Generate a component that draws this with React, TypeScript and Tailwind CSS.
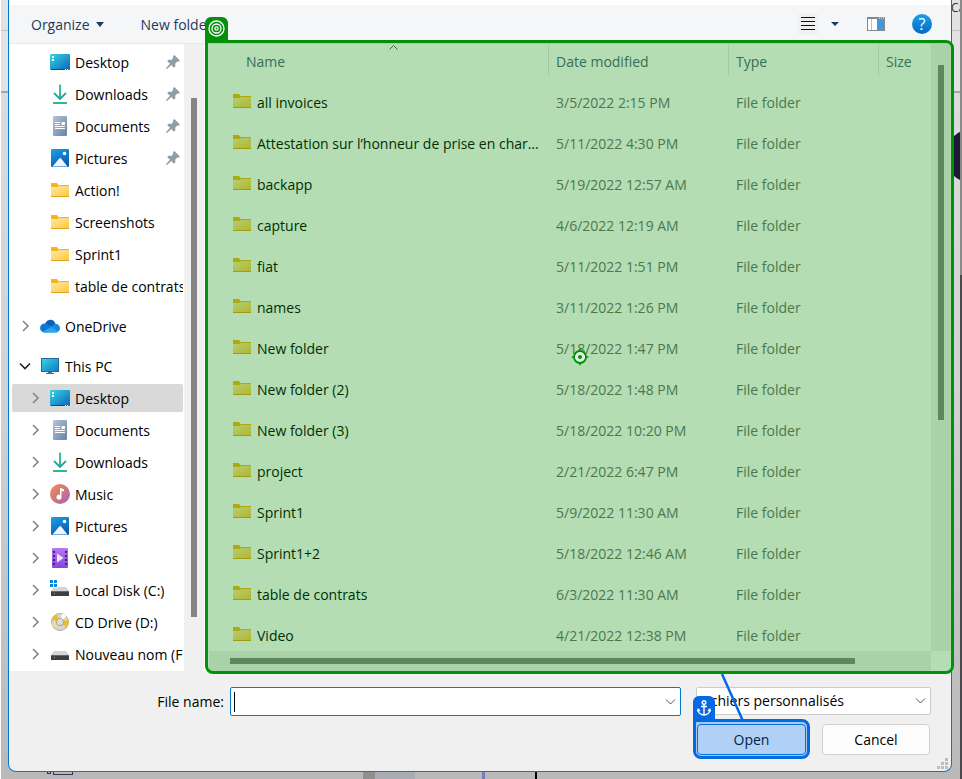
import type { ReactNode } from "react";

function FolderIcon() {
  return (
    <svg width="18" height="16" viewBox="0 0 18 16" aria-hidden="true">
      <defs>
        <linearGradient id="folder" x1="0" y1="0" x2="1" y2="1">
          <stop offset="0" stopColor="#ffe8a6" />
          <stop offset="1" stopColor="#fdc93f" />
        </linearGradient>
      </defs>
      <path d="M0 1h6l1.500 2H18v6H0z" fill="#f5b517" />
      <path d="M0 5h6.500l1.500-1H18v10H0z" fill="url(#folder)" />
      <path d="M0 14h18v1H0z" fill="#e0a21a" />
    </svg>
  );
}

function DesktopIcon() {
  return (
    <svg width="20" height="16" viewBox="0 0 20 16" aria-hidden="true">
      <defs>
        <linearGradient id="desk" x1="0" y1="0" x2="1" y2="1">
          <stop offset="0" stopColor="#33d6e2" />
          <stop offset="1" stopColor="#0f63bd" />
        </linearGradient>
      </defs>
      <rect width="20" height="16" rx="1" fill="url(#desk)" />
      <path d="M2 2h2v2H2zM2 5h2v2H2z" fill="#fff" />
      <path d="M1 15h14v1H1z" fill="#084a86" />
      <path d="M15 15h1v1h-1zM17 15h1v1h-1z" fill="#fff" />
    </svg>
  );
}

function DownloadIcon() {
  return (
    <svg width="16" height="20" viewBox="0 0 16 20" fill="none" aria-hidden="true">
      <defs>
        <linearGradient id="down" x1="0" y1="0" x2="0" y2="20" gradientUnits="userSpaceOnUse">
          <stop offset="0" stopColor="#2fc28c" />
          <stop offset="1" stopColor="#129a9a" />
        </linearGradient>
      </defs>
      <path d="M8 0.500V15M2 9l6 6 6-6" stroke="url(#down)" strokeWidth="1.800" />
      <path d="M1 19h14" stroke="#2fb98a" strokeWidth="2" />
    </svg>
  );
}

function DocumentIcon() {
  return (
    <svg width="14" height="20" viewBox="0 0 14 20" aria-hidden="true">
      <defs>
        <linearGradient id="doc" x1="0" y1="0" x2="1" y2="1">
          <stop offset="0" stopColor="#b3c6d9" />
          <stop offset="1" stopColor="#6584a8" />
        </linearGradient>
      </defs>
      <rect width="14" height="20" rx="1" fill="url(#doc)" />
      <path d="M2 6h5v1H2zM2 8h5v1H2zM8.500 6H12v3H8.500zM2 10h10v1H2zM2 12h10v1H2z" fill="#fff" />
    </svg>
  );
}

function PictureIcon() {
  return (
    <svg width="18" height="18" viewBox="0 0 18 18" aria-hidden="true">
      <defs>
        <linearGradient id="pic" x1="0" y1="0" x2="0.500" y2="1">
          <stop offset="0" stopColor="#1ba1e8" />
          <stop offset="1" stopColor="#0a5db5" />
        </linearGradient>
      </defs>
      <rect width="18" height="18" rx="1" fill="url(#pic)" />
      <circle cx="13.500" cy="4.500" r="1.800" fill="#fff" />
      <path d="M1.500 17.500L8.500 9.200q.7-.6 1.400 0L16.500 17.500z" fill="#eef6fd" />
    </svg>
  );
}

function CloudIcon() {
  return (
    <svg width="20" height="14" viewBox="0 0 20 14" aria-hidden="true">
      <path d="M5 5C7-.5 14-1 15.500 5L10 9z" fill="#0a5fb6" />
      <path d="M4 13.500C-1.500 12-1 5 4.500 4.500c2-.2 3.500.8 9 4.500L6 13.500z" fill="#0c77d4" />
      <path d="M10 8l5.500-3.200C21 5 21.500 12.500 16.500 13.300z" fill="#1489df" />
      <path d="M2.500 12.800L11 8l7.500 4.500c-1 .9-2 1.200-3 1.200H5.200c-1 0-2-.3-2.700-.9z" fill="#29a7ea" />
    </svg>
  );
}

function ComputerIcon() {
  return (
    <svg width="18" height="16" viewBox="0 0 18 16" aria-hidden="true">
      <defs>
        <linearGradient id="pc" x1="0" y1="0" x2="1" y2="1">
          <stop offset="0" stopColor="#35d8e4" />
          <stop offset="1" stopColor="#1476c6" />
        </linearGradient>
      </defs>
      <rect x="0.500" y="0.500" width="17" height="13" fill="url(#pc)" stroke="#216c9c" />
      <path d="M7 14h4v1h2v1H5v-1h2z" fill="#56697a" />
    </svg>
  );
}

function MusicIcon() {
  return (
    <svg width="20" height="20" viewBox="0 0 20 20" aria-hidden="true">
      <defs>
        <linearGradient id="music" x1="0" y1="0" x2="1" y2="1">
          <stop offset="0.100" stopColor="#ee8a58" />
          <stop offset="1" stopColor="#a75fb5" />
        </linearGradient>
      </defs>
      <circle cx="10" cy="10" r="10" fill="url(#music)" />
      <path d="M10 4h1l3 1.500v2L11.500 6.700v6.500A2.500 2.500 0 1 1 10 10.900z" fill="#fff" />
    </svg>
  );
}

function VideoIcon() {
  return (
    <svg width="16" height="20" viewBox="0 0 16 20" aria-hidden="true">
      <defs>
        <linearGradient id="video" x1="0" y1="0" x2="0" y2="1">
          <stop offset="0" stopColor="#b678f2" />
          <stop offset="1" stopColor="#8546dc" />
        </linearGradient>
      </defs>
      <rect width="16" height="20" rx="1" fill="url(#video)" />
      <path
        d="M1 3h2v2H1zM1 7h2v2H1zM1 11h2v2H1zM1 15h2v2H1zM13 3h2v2h-2zM13 7h2v2h-2zM13 11h2v2h-2zM13 15h2v2h-2z"
        fill="#402473"
      />
      <path d="M5 5.500l6.500 4.500L5 14.500z" fill="#f2e6ff" />
    </svg>
  );
}

function DriveIcon({ system = false }: { system?: boolean }) {
  return (
    <svg width="20" height="20" viewBox="0 0 20 20" aria-hidden="true">
      <path d="M4 7h12l3 4H1z" fill="#d3d5d8" />
      <path d="M1 11h18v5H1z" fill="#3d4043" />
      <path d="M1 11h18v1H1z" fill="#66696c" />
      <path d="M4 13h1v1H4z" fill="#39e05a" />
      {system && (
        <>
          <path d="M0 0h8v8H0z" fill="#fff" />
          <path d="M0 0h3v3H0zM4 0h3v3H4zM0 4h3v3H0zM4 4h3v3H4z" fill="#0c86d8" />
        </>
      )}
    </svg>
  );
}

function DiscIcon() {
  return (
    <svg width="18" height="18" viewBox="0 0 18 18" aria-hidden="true">
      <circle cx="9" cy="9" r="8.500" fill="#d9d6cc" stroke="#b3afa2" />
      <path d="M9 9L.8 7A8.500 8.500 0 0 1 6 1.200zM9 9l8.200-2.500a8.500 8.500 0 0 1-2 8z" fill="#e9c02c" />
      <path d="M9 9L2 14A8.500 8.500 0 0 1 .6 10z" fill="#f1dc86" />
      <path d="M9 9L11 .7A8.500 8.500 0 0 1 15.500 3z" fill="#fff" />
      <circle cx="9" cy="9" r="3.500" fill="#eeeeea" stroke="#9c9a90" />
      <circle cx="9" cy="9" r="1.400" fill="#fff" stroke="#a9a798" strokeWidth="0.600" />
    </svg>
  );
}

function PinIcon() {
  return (
    <svg width="14" height="14" viewBox="0 0 14 14" aria-hidden="true" fill="#919da5">
      <path d="M7 1.200L8.300 0 14 5.400l-1.200 1.200-1.500-.1-2.100 2.300.1 2.700-1.200 1.200-2.700-2.600L1 13.900l-1 .1.200-1L3.900 8.700 1.200 6l1.200-1.200 2.800.1 2-2z" />
    </svg>
  );
}

function Chevron({ open = false }: { open?: boolean }) {
  return open ? (
    <svg width="12" height="12" viewBox="0 0 12 12" fill="none" stroke="#222" strokeWidth="1.600" aria-hidden="true">
      <path d="M1 3.500l5 5 5-5" />
    </svg>
  ) : (
    <svg width="12" height="12" viewBox="0 0 12 12" fill="none" stroke="#858585" strokeWidth="1.600" aria-hidden="true">
      <path d="M4 1l5 5-5 5" />
    </svg>
  );
}

function FieldChevron() {
  return (
    <svg width="11" height="6" viewBox="0 0 11 6" fill="none" stroke="#505050" aria-hidden="true">
      <path d="M1 .5l4.500 4.500L10 .5" />
    </svg>
  );
}

type Place = { name: string; icon: ReactNode; pinned?: boolean; expandable?: boolean; selected?: boolean };

const quickAccess: Place[] = [
  { name: "Desktop", icon: <DesktopIcon />, pinned: true },
  { name: "Downloads", icon: <DownloadIcon />, pinned: true },
  { name: "Documents", icon: <DocumentIcon />, pinned: true },
  { name: "Pictures", icon: <PictureIcon />, pinned: true },
  { name: "Action!", icon: <FolderIcon /> },
  { name: "Screenshots", icon: <FolderIcon /> },
  { name: "Sprint1", icon: <FolderIcon /> },
  { name: "table de contrats", icon: <FolderIcon /> },
];

const thisPc: Place[] = [
  { name: "Desktop", icon: <DesktopIcon />, expandable: true, selected: true },
  { name: "Documents", icon: <DocumentIcon />, expandable: true },
  { name: "Downloads", icon: <DownloadIcon />, expandable: true },
  { name: "Music", icon: <MusicIcon />, expandable: true },
  { name: "Pictures", icon: <PictureIcon />, expandable: true },
  { name: "Videos", icon: <VideoIcon />, expandable: true },
  { name: "Local Disk (C:)", icon: <DriveIcon system />, expandable: true },
  { name: "CD Drive (D:)", icon: <DiscIcon />, expandable: true },
  { name: "Nouveau nom (F:)", icon: <DriveIcon />, expandable: true },
];

const files = [
  ["all invoices", "3/5/2022 2:15 PM"],
  ["Attestation sur l’honneur de prise en charge", "5/11/2022 4:30 PM"],
  ["backapp", "5/19/2022 12:57 AM"],
  ["capture", "4/6/2022 12:19 AM"],
  ["fiat", "5/11/2022 1:51 PM"],
  ["names", "3/11/2022 1:26 PM"],
  ["New folder", "5/18/2022 1:47 PM"],
  ["New folder (2)", "5/18/2022 1:48 PM"],
  ["New folder (3)", "5/18/2022 10:20 PM"],
  ["project", "2/21/2022 6:47 PM"],
  ["Sprint1", "5/9/2022 11:30 AM"],
  ["Sprint1+2", "5/18/2022 12:46 AM"],
  ["table de contrats", "6/3/2022 11:30 AM"],
  ["Video", "4/21/2022 12:38 PM"],
];

function PlaceRow({ place }: { place: Place }) {
  return (
    <li className="flex h-8 items-center pr-px pl-[3px]">
      <button
        type="button"
        className={`flex h-7 w-full items-center overflow-hidden rounded-xs pl-[17px] text-left ${place.selected ? "bg-[#d9d9d9]" : ""}`}
      >
        <span className="w-[19px] shrink-0">{place.expandable && <Chevron />}</span>
        <span className="flex w-6 shrink-0 justify-center">{place.icon}</span>
        <span className="ml-[3px] grow pt-0.5 whitespace-nowrap">{place.name}</span>
        {place.pinned && (
          <span className="mr-[3px] shrink-0">
            <PinIcon />
          </span>
        )}
      </button>
    </li>
  );
}

function RootRow({ name, icon, open }: { name: string; icon: ReactNode; open?: boolean }) {
  return (
    <li className="mt-2 flex h-8 items-center pl-2.5">
      <button type="button" className="flex items-center">
        <Chevron open={open} />
        <span className="ml-2 flex w-[22px] justify-center">{icon}</span>
        <span className="ml-1 pt-0.5">{name}</span>
      </button>
    </li>
  );
}

function Toolbar() {
  return (
    <div className="flex h-[39px] items-center border-b border-[#e8e9eb] bg-[#f5f6f8] pr-[19px] pl-[22px] text-[#1e395b]">
      <button type="button" className="flex items-center gap-1.5">
        <span className="pt-0.5">Organize</span>
        <svg width="8" height="5" viewBox="0 0 8 5" fill="#1e395b" aria-hidden="true">
          <path d="M0 0h8L4 5z" />
        </svg>
      </button>
      <button type="button" className="ml-[37px] pt-0.5">
        New folder
      </button>
      <div className="ml-auto flex items-center">
        <button type="button" aria-label="Change view" className="bg-[#f0f0f0] px-[3px] py-[3px]">
          <svg width="14" height="14" viewBox="0 0 14 14" stroke="#111" aria-hidden="true">
            <path d="M0 .5h14M0 4.500h14M0 8.500h14M0 12.500h14" />
          </svg>
        </button>
        <button type="button" aria-label="More views" className="ml-3 p-px">
          <svg width="8" height="4" viewBox="0 0 8 4" fill="#1e395b" aria-hidden="true">
            <path d="M0 0h8L4 4z" />
          </svg>
        </button>
        <button type="button" aria-label="Show the preview pane" className="ml-[27px]">
          <svg width="18" height="14" viewBox="0 0 18 14" aria-hidden="true">
            <rect x="0.500" y="0.500" width="17" height="13" fill="#fff" stroke="#85888c" />
            <path d="M1 0h16v2H1z" fill="#85888c" />
            <path d="M4 2h1v11H4z" fill="#b9bcc0" />
            <path d="M10 2h7v11h-7z" fill="#3f98e0" />
            <path d="M12 .5h1v1h-1zM14 .5h1v1h-1zM16 .5h1v1h-1z" fill="#fff" />
          </svg>
        </button>
        <button
          type="button"
          aria-label="Get help"
          className="ml-[27px] flex size-5 items-center justify-center rounded-full bg-linear-to-b from-[#1ba0ea] to-[#0868c4] text-base leading-5 text-white"
        >
          ?
        </button>
      </div>
    </div>
  );
}

function Sidebar() {
  return (
    <nav className="flex w-[195px] shrink-0 bg-white text-black">
      <ul className="min-w-0 grow pt-0.5 pb-px">
        {quickAccess.map((place) => (
          <PlaceRow key={place.name} place={place} />
        ))}
        <RootRow name="OneDrive" icon={<CloudIcon />} />
        <RootRow name="This PC" icon={<ComputerIcon />} open />
        {thisPc.map((place) => (
          <PlaceRow key={place.name} place={place} />
        ))}
      </ul>
      <div className="w-5 shrink-0 bg-[#f0f0f0] px-[7px] pt-[54px] pb-[54px]">
        <div className="h-full bg-[#858585]" />
      </div>
    </nav>
  );
}

function FileTable() {
  return (
    <table className="w-full table-fixed border-collapse text-left">
      <colgroup>
        <col />
        <col className="w-[180px]" />
        <col className="w-[150px]" />
        <col className="w-[52px]" />
      </colgroup>
      <thead>
        <tr className="h-[38px] align-top text-[#4c607a]">
          <th className="p-0 font-normal">
            <div className="relative h-8 border-r border-[#e5e5e5] pt-0.5 pl-10 leading-8">
              Name
              <svg
                className="absolute top-px left-[183px]"
                width="9"
                height="5"
                viewBox="0 0 9 5"
                fill="none"
                stroke="#5c5c5c"
                aria-hidden="true"
              >
                <path d="M.5 4.500l4-4 4 4" />
              </svg>
            </div>
          </th>
          <th className="p-0 font-normal">
            <div className="h-8 border-r border-[#e5e5e5] pt-0.5 pl-[7px] leading-8">Date modified</div>
          </th>
          <th className="p-0 font-normal">
            <div className="h-8 border-r border-[#e5e5e5] pt-0.5 pl-[7px] leading-8">Type</div>
          </th>
          <th className="p-0 font-normal">
            <div className="h-8 pt-0.5 pl-[7px] leading-8">Size</div>
          </th>
        </tr>
      </thead>
      <tbody>
        {files.map(([name, date]) => (
          <tr key={name} className="h-[41px] text-[#6d6d6d]">
            <td className="p-0 pr-1.5 text-black">
              <div className="flex items-center gap-1.5 pl-[27px]">
                <span className="mb-1 shrink-0">
                  <FolderIcon />
                </span>
                <span className="truncate">{name}</span>
              </div>
            </td>
            <td className="p-0 pl-[7px]">{date}</td>
            <td className="p-0 pl-[7px]">File folder</td>
            <td />
          </tr>
        ))}
      </tbody>
    </table>
  );
}

function TargetHighlight() {
  return (
    <div className="pointer-events-none absolute -top-1 -right-[3px] -bottom-[3px] left-px rounded-lg rounded-tl-none border-[3px] border-[#048f0c] bg-[#069006]/30 bg-clip-padding">
      <div className="absolute -top-[26px] -left-[3px] flex size-[23px] items-center justify-center rounded-t-md bg-[#048f0c]">
        <svg width="17" height="17" viewBox="0 0 17 17" fill="none" stroke="#fff" strokeWidth="1.300" aria-hidden="true">
          <circle cx="8.500" cy="8.500" r="7.500" />
          <circle cx="8.500" cy="8.500" r="4.500" />
          <circle cx="8.500" cy="8.500" r="1.600" />
        </svg>
      </div>
      <svg
        className="absolute top-1/2 left-1/2 -translate-x-1/2 -translate-y-1/2"
        width="17"
        height="17"
        viewBox="0 0 17 17"
        aria-hidden="true"
      >
        <circle cx="8.500" cy="8.500" r="6" fill="#dff2df" stroke="#048f0c" strokeWidth="1.800" />
        <circle cx="8.500" cy="8.500" r="2" fill="#048f0c" />
        <path d="M8.500 0v3M8.500 14v3M0 8.500h3M14 8.500h3" stroke="#048f0c" strokeWidth="1.500" />
      </svg>
    </div>
  );
}

function FilePane() {
  return (
    <section className="relative flex min-w-0 grow flex-col bg-white pl-[2px]">
      <div className="flex h-0 grow overflow-hidden">
        <div className="min-w-0 grow">
          <FileTable />
        </div>
        <div className="w-5 shrink-0 bg-[#f0f0f0] px-[7px] pt-[21px]">
          <div className="h-[355px] bg-[#858585]" />
        </div>
      </div>
      <div className="mr-5 ml-[3px] h-5 shrink-0 bg-[#f0f0f0] py-[7px] pr-[76px] pl-[21px]">
        <div className="h-full bg-[#858585]" />
      </div>
      <TargetHighlight />
    </section>
  );
}

function Footer() {
  return (
    <form className="pt-4 pr-5 pb-4 pl-5 text-black" onSubmit={(event) => event.preventDefault()}>
      <div className="flex items-start">
        <label htmlFor="file-name" className="w-[195px] text-right leading-[29px]">
          File name:
        </label>
        <div className="ml-[6px] flex h-[29px] grow items-center rounded-xs border border-[#0078d4] bg-white pr-1 pl-[3px]">
          <span className="h-5 w-px bg-black" />
          <input id="file-name" type="text" className="min-w-0 grow bg-transparent outline-none" />
          <button type="button" aria-label="Previous file names">
            <FieldChevron />
          </button>
        </div>
        <div className="relative ml-[15px] h-7 w-[235px]">
          <select
            aria-label="File type"
            className="h-7 w-full appearance-none rounded-xs border border-[#cccccc] bg-white pr-6 pl-[3px] outline-none"
          >
            <option>Fichiers personnalisés</option>
          </select>
          <span className="pointer-events-none absolute inset-y-0 right-[5px] flex items-center">
            <FieldChevron />
          </span>
        </div>
      </div>
      <div className="mt-2 flex justify-end gap-4 pr-px">
        <div className="relative">
          <button type="submit" className="h-[31px] w-[109px] rounded-sm border border-[#0078d4] bg-[#fdfdfd]">
            Open
          </button>
          <div className="pointer-events-none absolute -inset-x-1 -top-[5px] -bottom-1 rounded-lg rounded-tl-none border-[3px] border-[#0469e3] bg-[#0469e3]/30 bg-clip-padding">
            <svg
              className="absolute -top-[48px] left-[25px]"
              width="26"
              height="48"
              viewBox="0 0 26 48"
              stroke="#0469e3"
              strokeWidth="2.500"
              aria-hidden="true"
            >
              <path d="M1 0l21 47" />
            </svg>
            <div className="absolute -top-[26px] -left-[3px] flex h-[23px] w-[22px] items-center justify-center rounded-t-md bg-[#0469e3]">
              <svg width="14" height="16" viewBox="0 0 14 16" fill="none" stroke="#fff" strokeWidth="1.400" aria-hidden="true">
                <circle cx="7" cy="2.500" r="1.800" />
                <path d="M7 4.300V15M4 6.500h6M1 9.500c0 3.500 3 5.300 6 5.500 3-.2 6-2 6-5.500M.5 11.500l.7-2.200 1.800 1.600M13.500 11.500l-.7-2.200-1.800 1.600" />
              </svg>
            </div>
          </div>
        </div>
        <button type="button" className="h-[31px] w-[108px] rounded-sm border border-[#d0d0d0] bg-[#fdfdfd]">
          Cancel
        </button>
      </div>
    </form>
  );
}

export default function App() {
  return (
    <main className="relative min-h-screen overflow-hidden bg-linear-to-b from-[#dedede] via-[#d2d2d2] to-[#b9b9b9] pr-[10px] pb-[7px] pl-2 font-['Open_Sans','Noto_Sans',sans-serif] text-sm">
      <div className="pointer-events-none absolute inset-0" aria-hidden="true">
        <div className="absolute inset-x-0 top-0 h-[93px] border-b-2 border-[#a5a5a5] bg-[#e2e2e2]" />
        <div className="absolute inset-x-0 top-[30px] h-px bg-[#c2c2c2]" />
        <span className="absolute top-0 left-[951px] text-xs leading-4 text-[#333]">Ca</span>
        <div className="absolute top-[129px] -right-[37px] size-[54px] rounded-full bg-[#1c1a38]" />
        <div className="absolute inset-y-0 left-0 w-px bg-white" />
        <div className="absolute inset-y-0 right-0 w-0.5 bg-[#8a8a8a]" />
        <div className="absolute right-0 bottom-0 h-[504px] w-0.5 bg-[#4a4a4c]" />
        <div className="absolute bottom-[5px] left-[47px] h-3 w-1 border border-[#33334d]" />
        <div className="absolute bottom-1 left-[53px] h-3 w-5 border border-[#33334d]" />
        <div className="absolute bottom-0 left-[363px] h-2 w-3 bg-[#909090]" />
        <div className="absolute bottom-0 left-[375px] h-2 w-10 bg-[#a9abb5]" />
        <div className="absolute bottom-0 left-[482px] h-2 w-[3px] bg-[#6f82b0]" />
        <div className="absolute bottom-0 left-[535px] h-2 w-0.5 bg-black" />
      </div>
      <div className="relative rounded-b-lg border-x border-b border-[#0078d4] bg-[#f0f0f0]">
        <div className="h-[5px] bg-white" />
        <Toolbar />
        <div className="flex">
          <Sidebar />
          <FilePane />
        </div>
        <Footer />
        <svg className="absolute right-[3px] bottom-0.5" width="11" height="11" viewBox="0 0 11 11" fill="#bdbdbd" aria-hidden="true">
          <path d="M8 0h3v3H8zM4 4h3v3H4zM8 4h3v3H8zM0 8h3v3H0zM4 8h3v3H4zM8 8h3v3H8z" />
        </svg>
      </div>
    </main>
  );
}
